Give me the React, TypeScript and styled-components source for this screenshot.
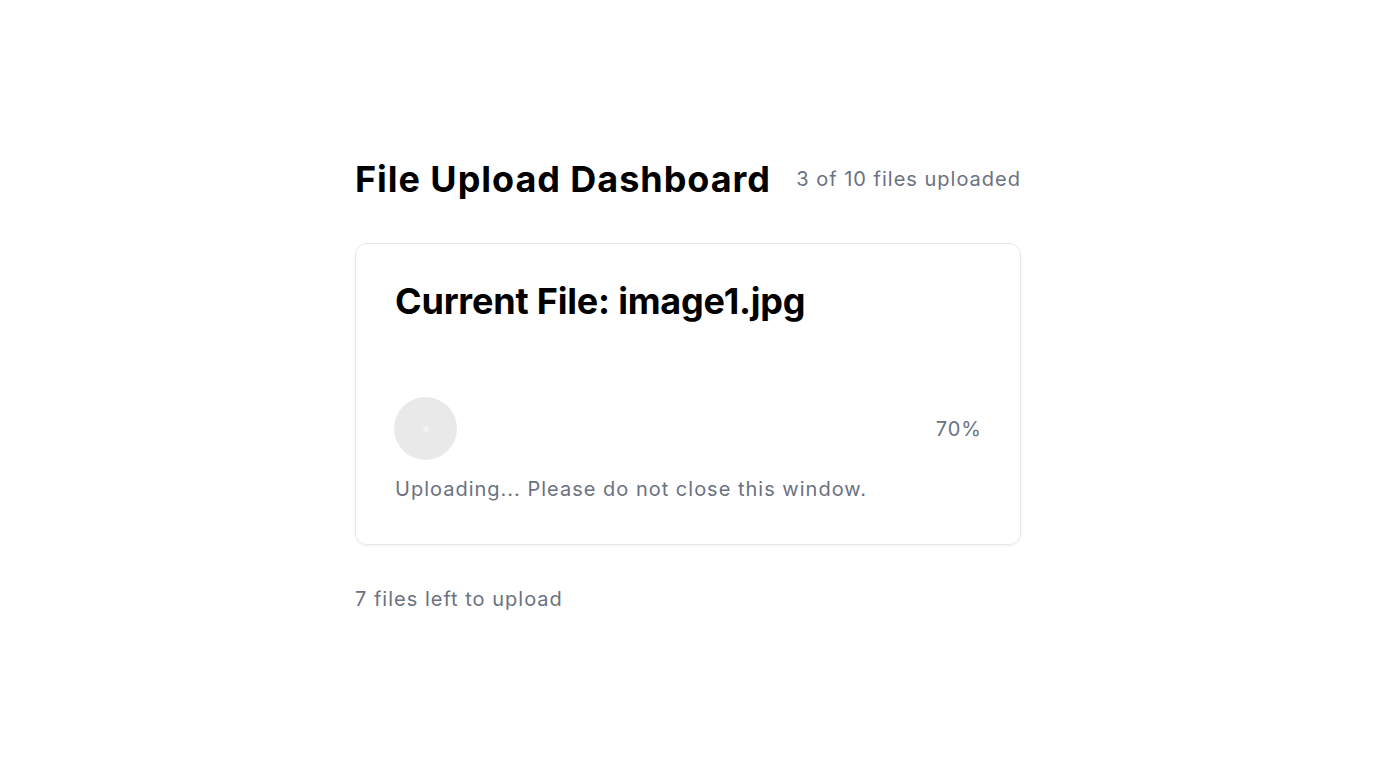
import React from "react";
import styled, { createGlobalStyle } from "styled-components";

const Global = createGlobalStyle`
  html, body { margin: 0; padding: 0; background: #ffffff; }
  body { font-family: Inter, "Noto Sans", Arial, sans-serif; color: #000; }
`;

const Page = styled.main`
  min-height: 100vh;
  display: flex;
  align-items: center;
  justify-content: center;
  box-sizing: border-box;
  padding-top: 4px;
`;

const Wrap = styled.div`
  width: 666px;
  display: flex;
  flex-direction: column;
`;

const Header = styled.header`
  display: flex;
  align-items: center;
  justify-content: space-between;
  height: 40px;
  margin-bottom: 44px;
`;

const Title = styled.h1`
  margin: 0;
  font-size: 36px;
  line-height: 40px;
  font-weight: 700;
  letter-spacing: 0.95px;
`;

const Muted = styled.span`
  font-size: 20px;
  line-height: 28px;
  color: #6b7280;
  letter-spacing: 1px;
`;

const Card = styled.section`
  border: 1px solid #e5e7eb;
  border-radius: 12px;
  box-shadow: 0 1px 3px rgba(0, 0, 0, 0.06);
  padding: 37px 38px 41px 39px;
  display: flex;
  flex-direction: column;
`;

const CardTitle = styled.h2`
  margin: 0 0 76px;
  font-size: 36px;
  line-height: 40px;
  font-weight: 700;
  letter-spacing: -0.2px;
`;

const ProgressRow = styled.div`
  display: flex;
  align-items: center;
  justify-content: space-between;
  margin-bottom: 15px;
`;

const Spinner = styled.div`
  width: 63px;
  height: 63px;
  margin-left: -1px;
  border-radius: 50%;
  background: #e9e9e9;
  display: flex;
  align-items: center;
  justify-content: center;
`;

const Dot = styled.div`
  width: 4px;
  height: 4px;
  border-radius: 50%;
  border: 1px solid #f6f6f6;
  background: #f2f2f2;
`;

const Status = styled(Muted)`
  display: block;
`;

const Footer = styled(Muted)`
  display: block;
  margin-top: 40px;
`;

export default function App() {
  return (
    <>
      <Global />
      <Page>
        <Wrap>
          <Header>
            <Title>File Upload Dashboard</Title>
            <Muted>3 of 10 files uploaded</Muted>
          </Header>
          <Card>
            <CardTitle>Current File: image1.jpg</CardTitle>
            <ProgressRow>
              <Spinner>
                <Dot />
              </Spinner>
              <Muted>70%</Muted>
            </ProgressRow>
            <Status>Uploading... Please do not close this window.</Status>
          </Card>
          <Footer>7 files left to upload</Footer>
        </Wrap>
      </Page>
    </>
  );
}
